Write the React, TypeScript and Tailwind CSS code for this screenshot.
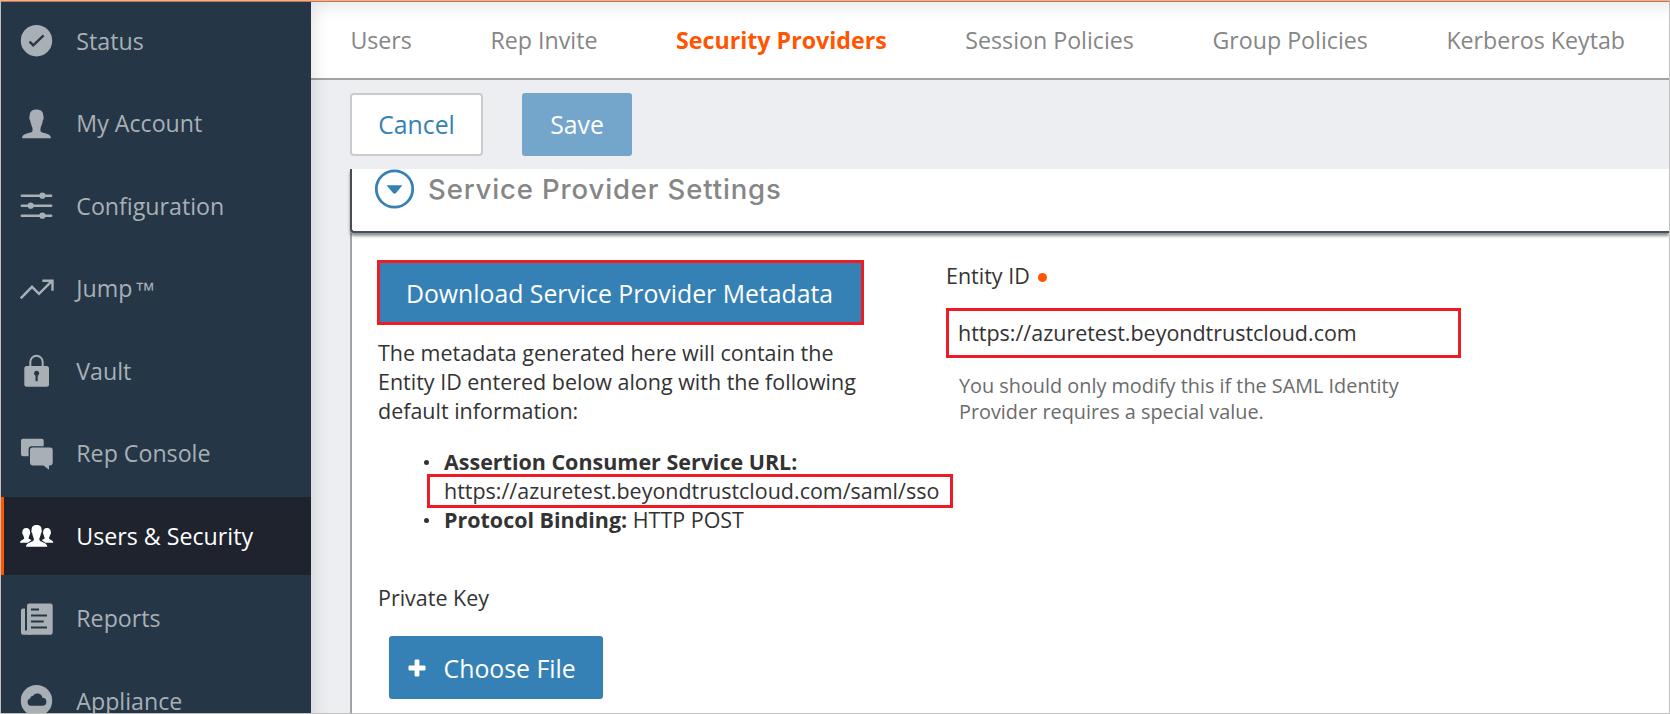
import type { ReactNode } from "react";

const navItems: { label: string; mark?: string; active?: boolean; icon: ReactNode }[] = [
  {
    label: "Status",
    icon: (
      <>
        <circle cx="17.5" cy="17.7" r="15.7" fill="currentColor" />
        <path d="M10.6 18.6L14.2 22.3L24.6 12.4" fill="none" stroke="#253646" strokeWidth="2.4" />
      </>
    ),
  },
  {
    label: "My Account",
    icon: (
      <path
        fill="currentColor"
        d="M17.5 3.5C21.5 3.5 24.5 5.5 24.3 10C25 10.5 24.8 13.5 23.8 14.5C23.3 18 22 20.5 21.5 22V25C22.5 28 32 26.5 32 32.2H3C3 26.5 12.5 28 13.5 25V22C13 20.5 11.7 18 11.2 14.5C10.2 13.5 10 10.5 10.7 10C10.5 5.5 13.5 3.5 17.5 3.5Z"
      />
    ),
  },
  {
    label: "Configuration",
    icon: (
      <g fill="currentColor">
        <path d="M2.8 7.7H32.2M2.8 17.7H32.2M2.8 27.7H32.2" stroke="currentColor" strokeWidth="2.4" strokeLinecap="round" />
        <circle cx="23.4" cy="7.7" r="3.1" />
        <circle cx="11.7" cy="17.7" r="3.1" />
        <circle cx="23.4" cy="27.7" r="3.1" />
      </g>
    ),
  },
  {
    label: "Jump",
    mark: "™",
    icon: (
      <path
        d="M1.7 27.3L13 15.8L20 22.8L33 9.8M23.3 9.7H33.5V19.8"
        fill="none"
        stroke="currentColor"
        strokeWidth="2.4"
      />
    ),
  },
  {
    label: "Vault",
    icon: (
      <>
        <rect x="5.3" y="13" width="24.7" height="20.8" rx="2.5" fill="currentColor" />
        <path d="M11.3 13.5V9a6.2 6.2 0 0 1 12.4 0V13.5" fill="none" stroke="currentColor" strokeWidth="2" />
        <circle cx="17.6" cy="20.2" r="2.5" fill="#253646" />
        <path d="M17.6 20V28.2" stroke="#253646" strokeWidth="2.2" />
      </>
    ),
  },
  {
    label: "Rep Console",
    icon: (
      <g fill="currentColor">
        <path d="M4 2.8H22.7A2 2 0 0 1 24.7 4.8V10.2H12.5A3 3 0 0 0 9.6 13V20.3H4A2 2 0 0 1 2 18.3V4.8A2 2 0 0 1 4 2.8Z" />
        <path d="M13.5 11.5H31.2A2.5 2.5 0 0 1 33.7 14V27A2.5 2.5 0 0 1 31.2 29.4H30V33.8L24.5 29.4H13.5A2.5 2.5 0 0 1 11 27V14A2.5 2.5 0 0 1 13.5 11.5Z" />
      </g>
    ),
  },
  {
    label: "Users & Security",
    active: true,
    icon: (
      <g fill="currentColor">
        <path d="M7.2 10C9.9 10 11.2 11.8 11 14C11.6 14.8 11 16.4 10.6 16.8L9.5 20.3C10 21.6 12.5 22 12.5 22L9 24.7H1C1 22.2 4.8 22 5.3 20.3L4 16.8C3.4 16.4 3 14.8 3.4 14C3.2 11.8 4.6 10 7.2 10Z" />
        <path d="M28 10C25.3 10 24 11.8 24.2 14C23.6 14.8 24.2 16.4 24.6 16.8L25.7 20.3C25.2 21.6 22.7 22 22.7 22L26.2 24.7H34.3C34.3 22.2 30.4 22 29.9 20.3L31.2 16.8C31.8 16.4 32.2 14.8 31.8 14C32 11.8 30.6 10 28 10Z" />
        <path
          stroke="#1e232e"
          strokeWidth="1"
          paintOrder="stroke"
          d="M17.6 7C21 7 22.8 9 22.5 11.8C23.2 12.6 22.8 14.8 22 15.3C21.6 17.8 20.8 19.3 20.4 20.4V22C21.6 24.7 28.3 24.2 28.3 28.7H7C7 24.2 13.6 24.7 14.8 22V20.4C14.4 19.3 13.6 17.8 13.2 15.3C12.4 14.8 12 12.6 12.7 11.8C12.4 9 14.2 7 17.6 7Z"
        />
      </g>
    ),
  },
  {
    label: "Reports",
    icon: (
      <>
        <rect x="8" y="2.5" width="25.7" height="31.3" rx="2.2" fill="currentColor" />
        <path d="M6 7.5H4A2 2 0 0 0 2 9.5V31.8A2 2 0 0 0 4 33.8H12V29.5H6Z" fill="currentColor" />
        <path d="M7 7V28.8" stroke="#253646" strokeWidth="2" />
        <path d="M12 8.5H20M12 14.5H28M12 20.5H24.7M12 26.5H28" stroke="#253646" strokeWidth="2" />
      </>
    ),
  },
  {
    label: "Appliance",
    icon: (
      <>
        <circle cx="17.5" cy="17.7" r="15.7" fill="currentColor" />
        <path
          fill="#253646"
          d="M12 22.8A3.8 3.8 0 0 1 11.2 15.4A3 3 0 0 1 14 12.7A5.2 5.2 0 0 1 23.4 14.8A4 4 0 0 1 23.4 22.8Z"
        />
      </>
    ),
  },
];

const tabs = ["Users", "Rep Invite", "Security Providers", "Session Policies", "Group Policies", "Kerberos Keytab"];

function Sidebar() {
  return (
    <nav className="flex w-[310px] shrink-0 flex-col gap-[4.5px] bg-[#253646]">
      {navItems.map((item) => (
        <a
          key={item.label}
          className={
            item.active
              ? "flex h-[78px] shrink-0 items-center gap-[22.3px] border-l-[3px] border-[#ff5500] bg-[#1e232e] pl-[15px] text-white"
              : "flex h-[78px] shrink-0 items-center gap-[22.3px] pl-[18px] text-[#a8b0b6]"
          }
        >
          <svg width="35" height="36" viewBox="0 0 35 36" className="shrink-0">
            {item.icon}
          </svg>
          <span className="pb-px text-[23.2px] leading-8 whitespace-nowrap">
            {item.label}
            {item.mark && <span className="ml-[2px] font-['Liberation_Sans',sans-serif] text-[21px] leading-none">{item.mark}</span>}
          </span>
        </a>
      ))}
    </nav>
  );
}

function TabBar() {
  return (
    <div className="flex h-[78px] shrink-0 items-center gap-[78.6px] border-b-2 border-[#a2a2a2] bg-white pl-[39.4px] text-[23.2px] leading-8 whitespace-nowrap text-[#868686]">
      {tabs.map((tab) => (
        <a key={tab} className={tab === "Security Providers" ? "font-bold text-[#ff5500]" : ""}>
          {tab}
        </a>
      ))}
    </div>
  );
}

function SectionHeader() {
  return (
    <div className="relative z-10 flex h-[64px] shrink-0 gap-[13px] rounded-bl-[4px] border-b-2 border-l-2 border-[#4a4e52] bg-white pl-[23px] shadow-[0_3px_3px_rgba(70,90,95,0.65)]">
      <svg width="40" height="40" viewBox="0 0 40 40" className="shrink-0">
        <circle cx="19.5" cy="20" r="18.2" fill="none" stroke="#3581b6" strokeWidth="2.8" />
        <path d="M11.6 16.2H27.4L21 23.9Q19.5 25.4 18 23.9Z" fill="#3581b6" />
      </svg>
      <h2 className="font-[Inter,sans-serif] text-[27.5px] leading-[41px] font-medium tracking-[0.87px] whitespace-nowrap text-[#868686]">
        Service Provider Settings
      </h2>
    </div>
  );
}

function ServiceProvider() {
  return (
    <div className="flex grow border-l-2 border-[#a2a2a2] bg-white pl-[26px] text-[21.47px] leading-[29px] text-[#333]">
      <div className="w-[568px] shrink-0 pt-[27px]">
        <button className="-ml-px block h-[65px] w-[487px] border-[3px] border-[#ed1c24] bg-[#3581b6] pt-[2px] pr-[2px] text-[24.8px] whitespace-nowrap text-white">
          Download Service Provider Metadata
        </button>
        <p className="mt-[13px] whitespace-nowrap">
          The metadata generated here will contain the
          <br />
          Entity ID entered below along with the following
          <br />
          default information:
        </p>
        <ul className="mt-[22px] pl-[66px] whitespace-nowrap">
          <li className="relative">
            <span className="absolute top-[13px] -left-[20px] size-[5px] rounded-full bg-[#333]" />
            <b>Assertion Consumer Service URL:</b>
            <br />
            <span className="relative">
              https://azuretest.beyondtrustcloud.com/saml/sso
              <span className="absolute top-[-2px] -left-[17px] h-[34px] w-[526px] border-[3px] border-[#ed1c24]" />
            </span>
          </li>
          <li className="relative">
            <span className="absolute top-[13px] -left-[20px] size-[5px] rounded-full bg-[#333]" />
            <b>Protocol Binding:</b> HTTP POST
          </li>
        </ul>
        <div className="mt-[49px]">Private Key</div>
        <button className="mt-[24px] ml-[11px] flex h-[63px] w-[214px] items-center rounded-[3px] bg-[#3581b6] pl-[19px] text-[24.8px] whitespace-nowrap text-white">
          <svg width="18" height="18" viewBox="0 0 18 18" className="mr-[17.6px] shrink-0">
            <path
              fill="currentColor"
              d="M7.6 0.5H10.4Q11.4 0.5 11.4 1.5V6.6H16.5Q17.5 6.6 17.5 7.6V10.4Q17.5 11.4 16.5 11.4H11.4V16.5Q11.4 17.5 10.4 17.5H7.6Q6.6 17.5 6.6 16.5V11.4H1.5Q0.5 11.4 0.5 10.4V7.6Q0.5 6.6 1.5 6.6H6.6V1.5Q6.6 0.5 7.6 0.5Z"
            />
          </svg>
          <span className="pt-px">Choose File</span>
        </button>
      </div>
      <div className="pt-[28px]">
        <div className="flex items-center gap-[8px]">
          Entity ID
          <span className="mt-[4px] size-[9px] rounded-full bg-[#ff5500]" />
        </div>
        <div className="mt-[18px] flex h-[50px] w-[515px] items-center border-[3px] border-[#ed1c24] pb-[2px] pl-[9px]">
          https://azuretest.beyondtrustcloud.com
        </div>
        <p className="mt-[15px] pl-[13px] text-[19.83px] leading-[26px] whitespace-nowrap text-[#6b6b6b]">
          You should only modify this if the SAML Identity
          <br />
          Provider requires a special value.
        </p>
      </div>
    </div>
  );
}

export default function App() {
  return (
    <div className="flex h-[714px] w-[1670px] flex-col overflow-hidden border border-[#c0c0c0] bg-[#edeef2] font-['Open_Sans',sans-serif]">
      <div className="h-px shrink-0 bg-[#f26a21]" />
      <div className="flex min-h-0 grow overflow-hidden">
        <Sidebar />
        <main className="relative flex grow flex-col overflow-hidden">
          <TabBar />
          <div className="flex h-[89px] shrink-0 items-start gap-[39px] pt-[13px] pl-[39px] text-[24.8px]">
            <button className="h-[63px] w-[133px] rounded-[4px] border-2 border-[#cbcbcb] bg-white text-[#3581b6]">Cancel</button>
            <button className="h-[63px] w-[110px] rounded-[3px] bg-[#74a5ca] text-white">Save</button>
          </div>
          <section className="ml-[39px] flex grow flex-col">
            <SectionHeader />
            <ServiceProvider />
          </section>
          <div className="pointer-events-none absolute top-0 -right-[40px] -bottom-[40px] left-0 shadow-[inset_0_0_20px_rgba(0,0,0,0.15)]" />
        </main>
      </div>
    </div>
  );
}
